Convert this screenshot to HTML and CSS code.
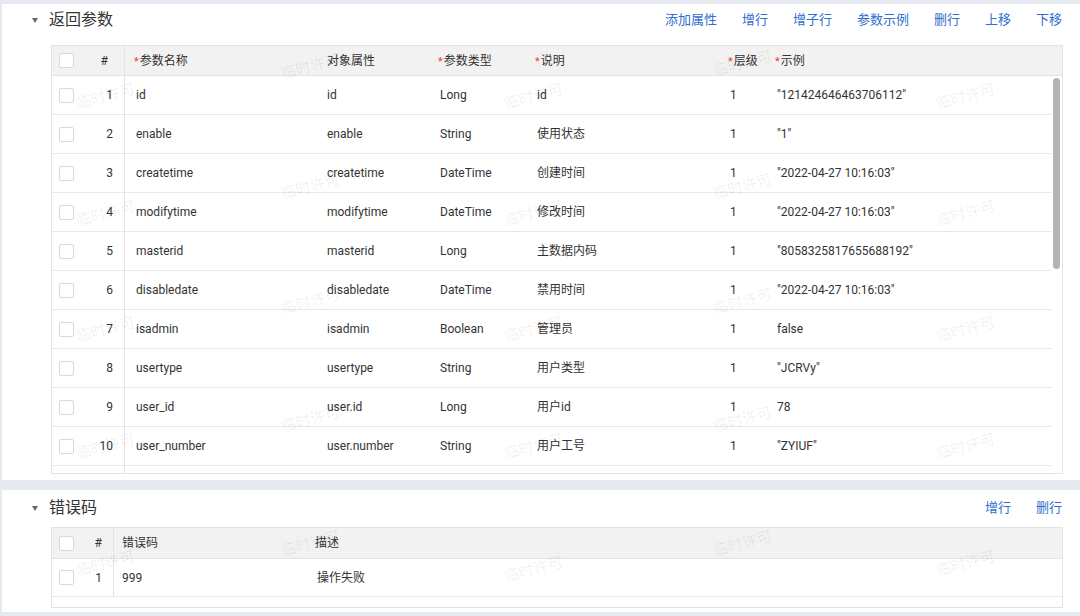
FILE: index.html
```html
<!DOCTYPE html>
<html lang="zh-CN">
<head>
<meta charset="utf-8">
<title>返回参数</title>
<link rel="stylesheet" href="styles.css">
</head>
<body>
<div class="page">
  <section class="panel panel-main">
    <div class="sec-head sec-head-main">
      <span class="caret"></span>
      <span class="sec-title">返回参数</span>
      <div class="actions">
        <a>添加属性</a><a>增行</a><a>增子行</a><a>参数示例</a><a>删行</a><a>上移</a><a>下移</a>
      </div>
    </div>
    <div class="tbl tbl-main">
      <div class="row head">
        <div class="c c-chk"><span class="cb"></span></div>
        <div class="c c-no c-hash">#</div>
        <div class="c c-t"><i>*</i>参数名称</div>
        <div class="c c-t c-plain">对象属性</div>
        <div class="c c-t"><i>*</i>参数类型</div>
        <div class="c c-t"><i>*</i>说明</div>
        <div class="c c-t"><i>*</i>层级</div>
        <div class="c c-t"><i>*</i>示例</div>
      </div>
      <div class="body">
        <div class="rows">
          <div class="row"><div class="c c-chk"><span class="cb"></span></div><div class="c c-no">1</div><div class="c c-t">id</div><div class="c c-t">id</div><div class="c c-t">Long</div><div class="c c-t">id</div><div class="c c-t">1</div><div class="c c-t">"121424646463706112"</div></div>
          <div class="row"><div class="c c-chk"><span class="cb"></span></div><div class="c c-no">2</div><div class="c c-t">enable</div><div class="c c-t">enable</div><div class="c c-t">String</div><div class="c c-t">使用状态</div><div class="c c-t">1</div><div class="c c-t">"1"</div></div>
          <div class="row"><div class="c c-chk"><span class="cb"></span></div><div class="c c-no">3</div><div class="c c-t">createtime</div><div class="c c-t">createtime</div><div class="c c-t">DateTime</div><div class="c c-t">创建时间</div><div class="c c-t">1</div><div class="c c-t">"2022-04-27 10:16:03"</div></div>
          <div class="row"><div class="c c-chk"><span class="cb"></span></div><div class="c c-no">4</div><div class="c c-t">modifytime</div><div class="c c-t">modifytime</div><div class="c c-t">DateTime</div><div class="c c-t">修改时间</div><div class="c c-t">1</div><div class="c c-t">"2022-04-27 10:16:03"</div></div>
          <div class="row"><div class="c c-chk"><span class="cb"></span></div><div class="c c-no">5</div><div class="c c-t">masterid</div><div class="c c-t">masterid</div><div class="c c-t">Long</div><div class="c c-t">主数据内码</div><div class="c c-t">1</div><div class="c c-t">"8058325817655688192"</div></div>
          <div class="row"><div class="c c-chk"><span class="cb"></span></div><div class="c c-no">6</div><div class="c c-t">disabledate</div><div class="c c-t">disabledate</div><div class="c c-t">DateTime</div><div class="c c-t">禁用时间</div><div class="c c-t">1</div><div class="c c-t">"2022-04-27 10:16:03"</div></div>
          <div class="row"><div class="c c-chk"><span class="cb"></span></div><div class="c c-no">7</div><div class="c c-t">isadmin</div><div class="c c-t">isadmin</div><div class="c c-t">Boolean</div><div class="c c-t">管理员</div><div class="c c-t">1</div><div class="c c-t">false</div></div>
          <div class="row"><div class="c c-chk"><span class="cb"></span></div><div class="c c-no">8</div><div class="c c-t">usertype</div><div class="c c-t">usertype</div><div class="c c-t">String</div><div class="c c-t">用户类型</div><div class="c c-t">1</div><div class="c c-t">"JCRVy"</div></div>
          <div class="row"><div class="c c-chk"><span class="cb"></span></div><div class="c c-no">9</div><div class="c c-t">user_id</div><div class="c c-t">user.id</div><div class="c c-t">Long</div><div class="c c-t">用户id</div><div class="c c-t">1</div><div class="c c-t">78</div></div>
          <div class="row"><div class="c c-chk"><span class="cb"></span></div><div class="c c-no">10</div><div class="c c-t">user_number</div><div class="c c-t">user.number</div><div class="c c-t">String</div><div class="c c-t">用户工号</div><div class="c c-t">1</div><div class="c c-t">"ZYIUF"</div></div>
          <div class="row"><div class="c c-chk"></div><div class="c c-no"></div><div class="c c-t"></div><div class="c c-t"></div><div class="c c-t"></div><div class="c c-t"></div><div class="c c-t"></div><div class="c c-t"></div></div>
        </div>
        <div class="gutter"><div class="thumb"></div></div>
      </div>
    </div>
  </section>

  <section class="panel panel-err">
    <div class="sec-head sec-head-err">
      <span class="caret"></span>
      <span class="sec-title">错误码</span>
      <div class="actions">
        <a>增行</a><a>删行</a>
      </div>
    </div>
    <div class="tbl tbl-err">
      <div class="erow ehead">
        <div class="c c-chk"><span class="cb"></span></div>
        <div class="c c-eno">#</div>
        <div class="c c-et">错误码</div>
        <div class="c c-et">描述</div>
      </div>
      <div class="erow">
        <div class="c c-chk"><span class="cb"></span></div>
        <div class="c c-eno">1</div>
        <div class="c c-et">999</div>
        <div class="c c-et c-desc">操作失败</div>
      </div>
      <div class="efoot"></div>
    </div>
  </section>
</div>

<div class="wm-layer">
  <span class="wm" style="left:105px;top:95px">临时许可</span>
  <span class="wm" style="left:105px;top:212px">临时许可</span>
  <span class="wm" style="left:105px;top:328px">临时许可</span>
  <span class="wm" style="left:105px;top:445px">临时许可</span>
  <span class="wm" style="left:105px;top:562px">临时许可</span>
  <span class="wm" style="left:310px;top:65px">临时许可</span>
  <span class="wm" style="left:310px;top:185px">临时许可</span>
  <span class="wm" style="left:310px;top:300px">临时许可</span>
  <span class="wm" style="left:310px;top:418px">临时许可</span>
  <span class="wm" style="left:310px;top:542px">临时许可</span>
  <span class="wm" style="left:533px;top:95px">临时许可</span>
  <span class="wm" style="left:533px;top:212px">临时许可</span>
  <span class="wm" style="left:533px;top:328px">临时许可</span>
  <span class="wm" style="left:533px;top:445px">临时许可</span>
  <span class="wm" style="left:533px;top:568px">临时许可</span>
  <span class="wm" style="left:742px;top:62px">临时许可</span>
  <span class="wm" style="left:742px;top:185px">临时许可</span>
  <span class="wm" style="left:742px;top:300px">临时许可</span>
  <span class="wm" style="left:742px;top:418px">临时许可</span>
  <span class="wm" style="left:742px;top:542px">临时许可</span>
  <span class="wm" style="left:965px;top:95px">临时许可</span>
  <span class="wm" style="left:965px;top:212px">临时许可</span>
  <span class="wm" style="left:965px;top:328px">临时许可</span>
  <span class="wm" style="left:965px;top:445px">临时许可</span>
  <span class="wm" style="left:965px;top:562px">临时许可</span>
</div>
</body>
</html>
```

FILE: styles.css
```css
* { box-sizing: border-box; }
html, body {
  margin: 0;
  padding: 0;
  background: #e6eaf0;
  width: 1080px;
  height: 616px;
  overflow: hidden;
}
body {
  font-family: Roboto, "Noto Sans CJK SC", sans-serif;
  font-size: 12px;
  color: #333;
  position: relative;
}
.page {
  display: flex;
  flex-direction: column;
  gap: 10px;
  padding: 4px 0 0 2px;
}
.panel {
  background: #fff;
  padding: 0 18px 0 0;
}
.panel-main { height: 476px; }
.panel-err { height: 122px; }

.sec-head {
  display: flex;
  align-items: center;
  padding-left: 30px;
}
.sec-head-main { height: 32px; margin-bottom: 9px; }
.sec-head-err { height: 36px; margin-bottom: 1px; }
.caret {
  width: 0;
  height: 0;
  border-left: 3.5px solid transparent;
  border-right: 3.5px solid transparent;
  border-top: 5px solid #666;
  margin-right: 11px;
  margin-top: 1px;
}
.sec-title {
  font-size: 16px;
  line-height: 20px;
  color: #333;
}
.actions {
  margin-left: auto;
  display: flex;
  gap: 25px;
  font-size: 13px;
  line-height: 18px;
}
.actions a {
  color: #2f6fcf;
  cursor: pointer;
}

.tbl {
  margin-left: 49px;
  margin-right: -1px;
  border: 1px solid #e3e3e3;
}
.row {
  display: grid;
  grid-template-columns: 38px 35px 191px 113px 97px 193px 47px 1fr;
  height: 39px;
  border-bottom: 1px solid #e8e8e8;
}
.row.head {
  height: 30px;
  background: #f2f2f2;
  border-bottom: 1px solid #e3e3e3;
}
.c {
  display: flex;
  align-items: center;
  white-space: nowrap;
  overflow: hidden;
  line-height: 16px;
}
.c-chk { padding-left: 7px; }
.cb {
  width: 15px;
  height: 15px;
  border: 1px solid #d9d9d9;
  border-radius: 2px;
  background: #fff;
}
.c-no {
  justify-content: flex-end;
  padding-right: 11px;
  border-right: 1px solid #e3e3e3;
}
.c-hash { padding-right: 16px; }
.c-t { padding-left: 11px; }
.head .c-t { padding-left: 9px; }
.head .c-plain { padding-left: 11px; }
.head i {
  font-style: normal;
  color: #e54545;
  margin-right: 1px;
  align-self: flex-start;
  padding-top: 8px;
  font-size: 11px;
}
.body {
  display: flex;
  height: 397px;
  overflow: hidden;
}
.rows {
  flex: 1;
  min-width: 0;
}
.gutter {
  width: 10px;
  padding: 2px 1px 0 1px;
}
.thumb {
  width: 7px;
  height: 191px;
  border-radius: 4px;
  background: #b3b3b3;
}

.erow {
  display: grid;
  grid-template-columns: 34px 28px 193px 1fr;
  height: 38px;
  border-bottom: 1px solid #e8e8e8;
}
.erow.ehead {
  height: 31px;
  background: #f2f2f2;
  border-bottom: 1px solid #e3e3e3;
}
.c-eno {
  justify-content: flex-end;
  padding-right: 11px;
  border-right: 1px solid #e3e3e3;
}
.c-et { padding-left: 8px; }
.c-desc { padding-left: 10px; }
.efoot { height: 10px; }

.wm-layer {
  position: absolute;
  left: 0;
  top: 0;
  width: 1080px;
  height: 616px;
  pointer-events: none;
  overflow: hidden;
}
.wm {
  position: absolute;
  transform: translate(-50%, -50%) rotate(-15deg);
  font-family: "Noto Sans CJK SC", sans-serif;
  font-size: 15px;
  color: rgba(0, 0, 0, 0.07);
  white-space: nowrap;
}
```
